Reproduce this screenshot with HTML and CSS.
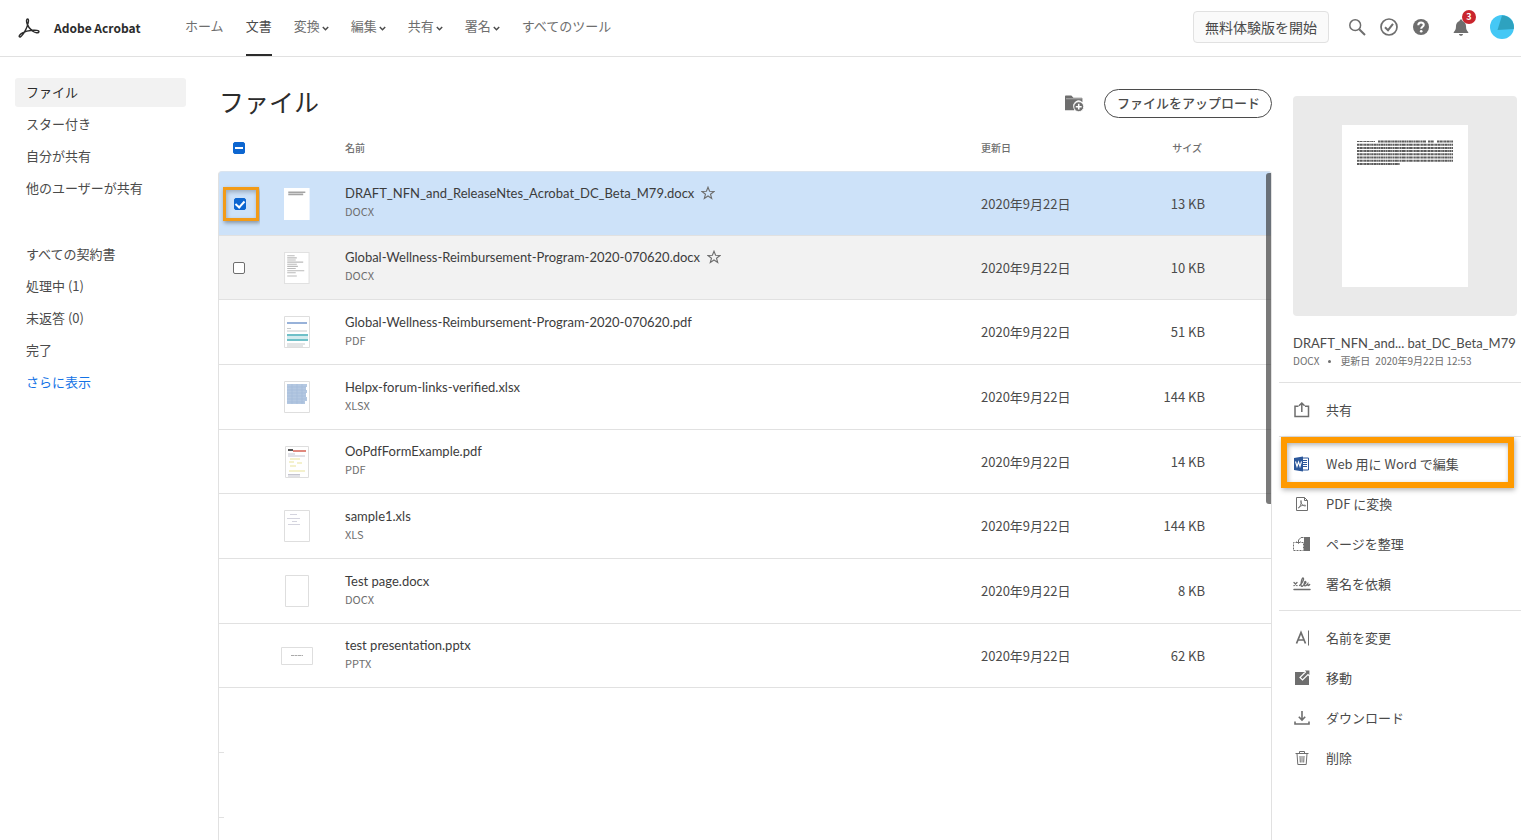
FILE: index.html
```html
<!DOCTYPE html>
<html lang="ja">
<head>
<meta charset="utf-8">
<meta name="viewport" content="width=device-width, initial-scale=1">
<title>Adobe Acrobat</title>
<link rel="stylesheet" href="styles.css">
</head>
<body>
<header class="topbar">
  <a class="brand" href="#">
    <svg class="brand-logo" viewBox="0 0 22 20" fill="none" stroke="#2c2c2c" stroke-width="1.4" stroke-linecap="round" stroke-linejoin="round"><path d="M9.700 1C8.300 1 8.300 3.300 9 5.500C9.900 8.600 12 11.200 14.800 13.200C17 14.700 20.600 15.600 20.900 13.800C21.200 12.200 17.500 12 14.300 12.300C10.600 12.600 7 13.500 4.500 14.900C2.300 16.100 .6 17.900 1.400 18.800C2.500 19.900 5.300 16.200 7.500 12.100C9.500 8.400 11.700 1 9.700 1Z"/></svg>
    <span>Adobe Acrobat</span>
  </a>
  <nav class="mainnav">
    <a href="#">ホーム</a>
    <a href="#" class="current">文書</a>
    <button type="button">変換<svg class="chev" viewBox="0 0 7 5"><path d="M.8 1 3.500 3.700 6.200 1"/></svg></button>
    <button type="button">編集<svg class="chev" viewBox="0 0 7 5"><path d="M.8 1 3.500 3.700 6.200 1"/></svg></button>
    <button type="button">共有<svg class="chev" viewBox="0 0 7 5"><path d="M.8 1 3.500 3.700 6.200 1"/></svg></button>
    <button type="button">署名<svg class="chev" viewBox="0 0 7 5"><path d="M.8 1 3.500 3.700 6.200 1"/></svg></button>
    <a href="#">すべてのツール</a>
  </nav>
  <div class="tools">
    <button type="button" class="trial">無料体験版を開始</button>
    <button type="button" class="tool" aria-label="検索"><svg viewBox="0 0 18 18" fill="none" stroke="#6e6e6e" stroke-width="1.5"><circle cx="7.200" cy="7.200" r="5.400"/><path d="M11.200 11.200 17 17" stroke-width="2"/></svg></button>
    <button type="button" class="tool" aria-label="タスク"><svg viewBox="0 0 18 18" fill="none" stroke="#6e6e6e" stroke-width="1.700"><circle cx="9" cy="9" r="8"/><path d="M5 9.300 8 12.200 13 5.800" stroke-width="2"/></svg></button>
    <button type="button" class="tool" aria-label="ヘルプ"><svg viewBox="0 0 18 18"><circle cx="9" cy="9" r="8" fill="#6e6e6e"/><path d="M6.300 7.200C6.300 3.700 11.800 3.800 11.800 6.800C11.800 8.800 9.200 8.700 9.200 10.800" fill="none" stroke="#fff" stroke-width="2"/><circle cx="9.200" cy="13.300" r="1.300" fill="#fff"/></svg></button>
    <button type="button" class="tool bell" aria-label="通知"><svg viewBox="0 0 18 18" fill="#6e6e6e"><path d="M9 1.500c.9 0 1.400.6 1.400 1.400 2.400.8 3.600 2.700 3.600 5.100 0 3.500.8 4.700 2.300 6.200v.9H1.700v-.9C3.200 12.700 4 11.500 4 8c0-2.400 1.200-4.300 3.600-5.100 0-.8.500-1.400 1.400-1.400zM7 16h4c0 1-.9 1.800-2 1.800S7 17 7 16z"/></svg><span class="count">3</span></button>
    <button type="button" class="avatar" aria-label="アカウント"><svg viewBox="0 0 24 24"><circle cx="12" cy="12" r="12" fill="#45c8f5"/><path d="M12 .5A11.800 11.800 0 0 1 23.800 14L7.500 15z" fill="#2ea2bf"/></svg></button>
  </div>
</header>

<div class="layout">
  <nav class="sidebar">
    <ul>
      <li><a href="#" class="selected">ファイル</a></li>
      <li><a href="#">スター付き</a></li>
      <li><a href="#">自分が共有</a></li>
      <li><a href="#">他のユーザーが共有</a></li>
    </ul>
    <ul>
      <li><a href="#">すべての契約書</a></li>
      <li><a href="#">処理中 (1)</a></li>
      <li><a href="#">未返答 (0)</a></li>
      <li><a href="#">完了</a></li>
      <li><a href="#" class="more">さらに表示</a></li>
    </ul>
  </nav>

  <main class="files">
    <div class="files-head">
      <h1>ファイル</h1>
      <button type="button" class="newfolder" aria-label="フォルダーを作成"><svg viewBox="0 0 18 16"><path d="M0 14.500V1.500C0 .9.400.5 1 .5h5l2 2h7.500c.6 0 1 .4 1 1v3.200A5 5 0 0 0 8.500 12.500l.3 2z" fill="#6e6e6e"/><path d="M1 3.500h15" stroke="#b9b9b9" stroke-width=".8"/><circle cx="13" cy="11" r="4.700" fill="#6e6e6e" stroke="#fff" stroke-width=".8"/><path d="M13 8.200v5.600M10.200 11h5.600" stroke="#fff" stroke-width="1.500"/></svg></button>
      <button type="button" class="upload">ファイルをアップロード</button>
    </div>
    <div class="list">
      <table>
        <thead>
          <tr>
            <th class="c-check"><input type="checkbox" class="mixed" checked aria-label="すべて選択"></th>
            <th class="c-thumb"></th>
            <th class="c-name">名前</th>
            <th class="c-date">更新日</th>
            <th class="c-size">サイズ</th>
          </tr>
        </thead>
        <tbody>
          <tr class="picked">
            <td class="c-check"><span class="mark"><input type="checkbox" checked aria-label="DRAFT_NFN_and_ReleaseNtes_Acrobat_DC_Beta_M79.docx"></span></td>
            <td class="c-thumb"><svg class="tall" viewBox="0 0 24 30"><path d="M0 0h24v30H0z" fill="#fff"/><path d="M4 4h16M4 6h14" stroke="#a4a4a4" stroke-width="1.600"/></svg></td>
            <td class="c-name"><div class="fname">DRAFT_NFN_and_ReleaseNtes_Acrobat_DC_Beta_M79.docx<svg class="star" viewBox="0 0 14 14"><path d="M7 1.200 8.600 5.300 13 5.500 9.500 8.200 10.700 12.500 7 10 3.300 12.500 4.500 8.200 1 5.500 5.400 5.300z"/></svg></div><div class="ftype">DOCX</div></td>
            <td class="c-date">2020年9月22日</td><td class="c-size">13 KB</td>
          </tr>
          <tr class="hovered">
            <td class="c-check"><input type="checkbox" aria-label="Global-Wellness-Reimbursement-Program-2020-070620.docx"></td>
            <td class="c-thumb"><svg class="tall" viewBox="0 0 24 30"><path d="M.5.500h23v29H.5z" fill="#fff" stroke="#e1e1e1"/><path d="M3 3.500h7M3 5.500h9M3 7.500h8M3 9.500h15M3 11.500h9M3 13.500h10M3 15.500h8M3 17.500h16M3 19.500h8M3 22.500h9" stroke="#bbb"/></svg></td>
            <td class="c-name"><div class="fname">Global-Wellness-Reimbursement-Program-2020-070620.docx<svg class="star" viewBox="0 0 14 14"><path d="M7 1.200 8.600 5.300 13 5.500 9.500 8.200 10.700 12.500 7 10 3.300 12.500 4.500 8.200 1 5.500 5.400 5.300z"/></svg></div><div class="ftype">DOCX</div></td>
            <td class="c-date">2020年9月22日</td><td class="c-size">10 KB</td>
          </tr>
          <tr>
            <td class="c-check"></td>
            <td class="c-thumb"><svg class="tall" viewBox="0 0 26 32"><path d="M.5.500h25v31H.5z" fill="#fff" stroke="#dedede"/><path d="M3 7h20" stroke="#7f9fd0" stroke-width="1.600"/><path d="M3 12.500h4M3 15h20M3 28h18M3 30h16" stroke="#c5cacc"/><path d="M3 18h21v7H3z" fill="#d3ebee"/><path d="M3 19h21M3 24h21" stroke="#4fb2bc" stroke-width="1.500"/></svg></td>
            <td class="c-name"><div class="fname">Global-Wellness-Reimbursement-Program-2020-070620.pdf</div><div class="ftype">PDF</div></td>
            <td class="c-date">2020年9月22日</td><td class="c-size">51 KB</td>
          </tr>
          <tr>
            <td class="c-check"></td>
            <td class="c-thumb"><svg class="tall" viewBox="0 0 26 32"><path d="M.5.500h25v31H.5z" fill="#fff" stroke="#dedede"/><path d="M3 3h20v3h-1v3h1v3h-1v4h1v4h-2v3H3z" fill="#b4c8e1"/><path d="M3 6h19M3 9h19M3 12h19M3 15h19M3 18h19M3 21h17M8 3v20M13 3v20M18 3v20" stroke="#a3bad9" stroke-width=".6"/></svg></td>
            <td class="c-name"><div class="fname">Helpx-forum-links-verified.xlsx</div><div class="ftype">XLSX</div></td>
            <td class="c-date">2020年9月22日</td><td class="c-size">144 KB</td>
          </tr>
          <tr>
            <td class="c-check"></td>
            <td class="c-thumb"><svg class="tall" viewBox="0 0 24 32"><path d="M.5.500h23v31H.5z" fill="#fff" stroke="#dedede"/><path d="M3 4h5" stroke="#555" stroke-width="2"/><path d="M8 5h13" stroke="#e0897e" stroke-width="2"/><path d="M3 8h7M3 10h17M3 28.500h12M3 30h12" stroke="#c4c4cf"/><path d="M5 13h10M4 16h5M12 17h5M5 20h6M4 25h16" stroke="#f1edbd" stroke-width="1.500"/></svg></td>
            <td class="c-name"><div class="fname">OoPdfFormExample.pdf</div><div class="ftype">PDF</div></td>
            <td class="c-date">2020年9月22日</td><td class="c-size">14 KB</td>
          </tr>
          <tr>
            <td class="c-check"></td>
            <td class="c-thumb"><svg class="tall" viewBox="0 0 26 32"><path d="M.5.500h25v31H.5z" fill="#fff" stroke="#dedede"/><path d="M6 4.500h7M3 8.500h13M8 11.500h5M4 14.500h12" stroke="#d4d4de"/></svg></td>
            <td class="c-name"><div class="fname">sample1.xls</div><div class="ftype">XLS</div></td>
            <td class="c-date">2020年9月22日</td><td class="c-size">144 KB</td>
          </tr>
          <tr>
            <td class="c-check"></td>
            <td class="c-thumb"><svg class="tall" viewBox="0 0 24 32"><path d="M.5.500h23v31H.5z" fill="#fff" stroke="#dedede"/></svg></td>
            <td class="c-name"><div class="fname">Test page.docx</div><div class="ftype">DOCX</div></td>
            <td class="c-date">2020年9月22日</td><td class="c-size">8 KB</td>
          </tr>
          <tr>
            <td class="c-check"></td>
            <td class="c-thumb"><svg class="wide" viewBox="0 0 32 18"><path d="M.5.500h31v17H.5z" fill="#fff" stroke="#dedede"/><path d="M10 8.500h12" stroke="#aaa" stroke-dasharray="3 .5"/></svg></td>
            <td class="c-name"><div class="fname">test presentation.pptx</div><div class="ftype">PPTX</div></td>
            <td class="c-date">2020年9月22日</td><td class="c-size">62 KB</td>
          </tr>
        </tbody>
      </table>
      <div class="scrollthumb"></div>
      <div class="emptyrows"></div>
    </div>
  </main>

  <aside class="details">
    <div class="preview">
      <svg viewBox="0 0 126 162"><path d="M0 0h126v162H0z" fill="#fff"/><g stroke="#5c5c5c" stroke-width="2" stroke-dasharray="2 .4 3 .3 1 .4"><path d="M15 16.500h18" stroke-width="1"/><path d="M36 16.500h48M86 16.500h6M95 16.500h16M15 19.700h96M15 22.900h96M15 26.100h96M15 29.300h96M15 32.500h96M15 35.700h96M15 38.900h43"/></g></svg>
    </div>
    <h2>DRAFT_NFN_and... bat_DC_Beta_M79</h2>
    <p class="meta"><span>DOCX</span><span class="dot"></span><span>更新日&ensp;2020年9月22日 12:53</span></p>
    <ul class="actions">
      <li><button type="button"><svg viewBox="0 0 18 18" fill="none" stroke="#6e6e6e" stroke-width="1.500"><path d="M5.500 5.200H2v10.300h13.500V5.200H12M8.800 11V2M6 4.800 8.800 2l2.800 2.800"/></svg>共有</button></li>
    </ul>
    <ul class="actions">
      <li class="boxed"><button type="button"><svg viewBox="0 0 18 18"><path d="M9 3h6.500v12H9z" fill="#fff" stroke="#2b579a"/><path d="M10 5.500h4M10 7.500h4M10 9.500h4M10 11.500h4" stroke="#2b579a"/><path d="M1 3 10 1.500v15L1 15z" fill="#2b579a"/><path d="M2.500 6.500 4 11.500 5.500 7 7 11.500 8.500 6.500" fill="none" stroke="#fff" stroke-width="1.100"/></svg>Web 用に Word で編集</button></li>
      <li><button type="button"><svg viewBox="0 0 18 18" fill="none" stroke="#6e6e6e"><path d="M3.500 2.500h8l3 3v10h-11zM11.500 2.500v3h3"/><path d="M8 5.500c-.8.600.3 3.300 1.600 4.500 1.200 1 3.200 1.300 3.200.6S8.500 9.800 5.500 12.500c-.5.600.2.900.9 0C7.500 11 9 6 8 5.500z" stroke-width=".9"/></svg>PDF に変換</button></li>
      <li><button type="button"><svg viewBox="0 0 18 18" fill="none" stroke="#6e6e6e"><path d="M11 2h6v14h-6z" fill="#6e6e6e" stroke="none"/><path d="M10.500 2.500H8L5.500 5M5.500 5v3M3.500 6.500l2 2 2-2" /><path d="M10.500 7.500h-10v8h10z" stroke-dasharray="2 1"/></svg>ページを整理</button></li>
      <li><button type="button"><svg viewBox="0 0 18 18" fill="none" stroke="#6e6e6e" stroke-width="1.300" stroke-linecap="round"><path d="M1 7.500 4 10.500M4 7.500 1 10.500"/><path d="M6.500 10.500C9 9 11.500 4 10.200 3 8.800 2.500 7.500 9 8.200 11c.6 1.200 2-.3 2.800-1.500 1.600-.8 2.500-2.500 1.500-3-1.200 0-2 3.300-.7 4.300 1.200.5 2.200-1 2.900-2 0 1.200.3 2 1 1.700l1-1"/><path d="M1 14.500h16" stroke-width="1.500"/></svg>署名を依頼</button></li>
    </ul>
    <ul class="actions">
      <li><button type="button"><svg viewBox="0 0 18 18" fill="none" stroke="#6e6e6e"><path d="M3.500 14.500 8 3.500l4.500 11M5 11h6" stroke-width="1.700"/><path d="M15.500 1.500v15"/></svg>名前を変更</button></li>
      <li><button type="button"><svg viewBox="0 0 18 18"><path d="M2 3h14v13H2z" fill="#6e6e6e"/><path d="M10.500 1H17v6.500l-2-2-5.500 5.500-2.500-2.500L12.500 3z" fill="#6e6e6e" stroke="#fff" stroke-width="1.200"/></svg>移動</button></li>
      <li><button type="button"><svg viewBox="0 0 18 18" fill="none" stroke="#6e6e6e" stroke-width="1.600"><path d="M9 2v8.500M5.800 7.800 9 11l3.200-3.200M2 12.500V15h14v-2.500"/></svg>ダウンロード</button></li>
      <li><button type="button"><svg viewBox="0 0 18 18" fill="none" stroke="#6e6e6e"><path d="M2.500 4.500h13M6.500 4.500v-2h5v2M4 4.500l.8 11h8.400l.8-11M7 7l.3 6.500M9 7v6.500M11 7l-.3 6.500"/></svg>削除</button></li>
    </ul>
  </aside>
</div>
</body>
</html>
```
FILE: styles.css
```css
* { box-sizing: border-box; }

body {
  margin: 0;
  min-height: 100vh;
  display: flex;
  flex-direction: column;
  background: #fff;
  color: #4b4b4b;
  font-family: "Noto Sans CJK JP", "Noto Sans", sans-serif;
  font-size: 13px;
  line-height: 18px;
}

button {
  margin: 0;
  padding: 0;
  border: 0;
  background: none;
  color: inherit;
  font: inherit;
  cursor: pointer;
}

a { color: inherit; text-decoration: none; }
ul { margin: 0; padding: 0; list-style: none; }
svg { display: block; flex: none; }

/* Top bar */
.topbar {
  display: flex;
  align-items: stretch;
  height: 57px;
  padding: 0 7px 0 18px;
  border-bottom: 1px solid #e1e1e1;
}

.brand {
  display: flex;
  align-items: center;
  gap: 14px;
  width: 167px;
  color: #2c2c2c;
  font-size: 12px;
  font-weight: 700;
  white-space: nowrap;
}

.brand-logo { width: 22px; height: 20px; }

.mainnav { display: flex; gap: 22px; color: #6e6e6e; white-space: nowrap; }

.mainnav > * {
  display: flex;
  align-items: center;
  gap: 2px;
  padding-bottom: 2px;
  border-bottom: 2px solid transparent;
}

.mainnav .current { border-color: #2c2c2c; color: #4b4b4b; }

.chev {
  width: 7px;
  height: 5px;
  margin-top: 4px;
  fill: none;
  stroke: #4b4b4b;
  stroke-width: 1.5;
}

.tools { display: flex; align-items: center; gap: 14px; margin-left: auto; padding-bottom: 3px; }

.trial {
  height: 32px;
  padding: 0 11px;
  margin-right: 5px;
  border: 1px solid #e1e1e1;
  border-radius: 4px;
  background: #fafafa;
  font-size: 14px;
  white-space: nowrap;
}

.tool svg { width: 18px; height: 18px; }
.bell { position: relative; margin: 0 6px 0 8px; }

.count {
  position: absolute;
  top: -8px;
  right: -6px;
  width: 14px;
  height: 14px;
  border-radius: 50%;
  background: #c9252d;
  color: #fff;
  font-size: 9px;
  font-weight: 700;
  line-height: 14px;
}

.avatar svg { width: 24px; height: 24px; }

/* Page columns */
.layout {
  flex: 1;
  display: grid;
  grid-template-columns: 218px minmax(0, 1fr) 249px;
}

.sidebar {
  display: flex;
  flex-direction: column;
  gap: 37px;
  padding: 21px 32px 0 15px;
}

.sidebar ul { display: grid; gap: 3px; }

.sidebar a {
  display: block;
  padding: 5px 11px 6px;
  border-radius: 3px;
}

.sidebar .selected { background: #f2f2f2; color: #2c2c2c; }
.sidebar .more { color: #1473e6; }

/* File list */
.files { display: flex; flex-direction: column; }

.files-head {
  display: flex;
  align-items: center;
  gap: 20px;
  padding-top: 32px;
  margin-bottom: 6px;
}

h1 {
  margin: 0 auto 0 0;
  padding: 0 0 4px 1px;
  color: #2c2c2c;
  font-size: 25px;
  font-weight: 400;
  line-height: 25px;
}

.newfolder svg { width: 19px; height: 17px; }

.upload {
  height: 29px;
  padding: 0 11px 2px 12px;
  border: 1px solid #4b4b4b;
  border-radius: 15px;
  font-weight: 500;
  white-space: nowrap;
}

.list {
  position: relative;
  flex: 1;
  display: flex;
  flex-direction: column;
}

input[type="checkbox"] {
  display: block;
  appearance: none;
  width: 12px;
  height: 12px;
  margin: 0;
  border: 1px solid #6e6e6e;
  border-radius: 2px;
  background: #fff;
}

input[type="checkbox"]:checked { border-color: #0d66d0; background: #0d66d0; }

input[type="checkbox"]:checked::after {
  content: "";
  display: block;
  width: 4px;
  height: 7px;
  margin: 0 auto;
  border: solid #fff;
  border-width: 0 2px 2px 0;
  transform: rotate(42deg);
}

input[type="checkbox"].mixed:checked::after {
  width: 8px;
  height: 2px;
  margin-top: 4px;
  border: 0;
  background: #fff;
  transform: none;
}

table { width: 100%; border-collapse: separate; border-spacing: 0; table-layout: fixed; }
th, td { padding: 0; text-align: left; vertical-align: middle; }
th { height: 47px; color: #6e6e6e; font-size: 10px; font-weight: 500; }
td { height: 65px; border-bottom: 1px solid #e1e1e1; }
tr:nth-child(3n + 2) td { height: 64px; }
tbody tr:first-child td { border-top: 1px solid #dae4ef; }
tbody .c-check { border-left: 1px solid #e1e1e1; }
tbody .c-size { border-right: 1px solid #e1e1e1; }
tbody tr:first-child .c-check { border-top-left-radius: 4px; }
tbody tr:first-child .c-size { border-top-right-radius: 4px; }

.c-check { width: 42px; }
th.c-check > input { margin-left: 15px; }
td.c-check > input { margin-left: 14px; }
.c-thumb { width: 85px; }
.c-thumb svg { margin: 0 auto; }
td.c-thumb { padding-right: 11px; }
.c-date { width: 120px; }
.c-size { width: 171px; padding-right: 66px; text-align: right; }
th.c-size { padding-right: 70px; }

.picked td { background: #cde2f9; }
.hovered td { background: #f2f2f2; }
.tall { height: 32px; }
.wide { height: 18px; }

.fname {
  display: flex;
  align-items: center;
  gap: 7px;
  color: #3c3c3c;
  font-family: Lato, "Noto Sans CJK JP", sans-serif;
  white-space: nowrap;
}

td.c-name { padding-bottom: 3px; }
.ftype { color: #6e6e6e; font-size: 11px; }
.star { width: 14px; height: 14px; fill: none; stroke: #6e6e6e; stroke-width: 1.1; }

.mark {
  display: block;
  width: 36px;
  margin-left: 4px;
  padding: 8px;
  border: 3px solid #f29b18;
  box-shadow: 1px 2px 4px rgba(0, 0, 0, 0.35), inset 1px 2px 4px rgba(0, 0, 0, 0.25);
}

.scrollthumb {
  position: absolute;
  top: 49px;
  right: 1px;
  width: 5px;
  height: 331px;
  border-radius: 3px 0 0 3px;
  background: rgba(50, 50, 50, 0.65);
}

.emptyrows {
  flex: 1;
  border: solid #e1e1e1;
  border-width: 0 1px;
  background: repeating-linear-gradient(transparent 0 64px, #e1e1e1 64px 65px) 0 0 / 5px 100% no-repeat;
}

/* Details pane */
.details { padding: 39px 0 0 7px; }

.preview {
  display: flex;
  align-items: center;
  justify-content: center;
  height: 220px;
  margin: 0 4px 18px 14px;
  border-radius: 4px;
  background: #eaeaea;
}

.preview svg { width: 126px; height: 162px; margin-bottom: 1px; }

h2 {
  margin: 0 0 0 14px;
  font-family: Lato, "Noto Sans CJK JP", sans-serif;
  font-size: 13px;
  font-weight: 400;
  line-height: 18px;
  white-space: nowrap;
}

.meta {
  display: flex;
  align-items: center;
  gap: 9px;
  margin: 0 0 12px 14px;
  color: #6e6e6e;
  font-size: 10px;
  white-space: nowrap;
}

.dot { width: 3px; height: 3px; border-radius: 50%; background: #6e6e6e; }

.actions { padding: 7px 0 6px; border-top: 1px solid #e1e1e1; }

.actions button {
  display: flex;
  align-items: center;
  gap: 15px;
  width: 100%;
  height: 40px;
  padding-left: 14px;
  text-align: left;
  white-space: nowrap;
}

.actions svg { width: 18px; height: 18px; }
.boxed { position: relative; }

.boxed::after {
  content: "";
  position: absolute;
  inset: -7px 7px -4px 2px;
  border: 6px solid #ff9a00;
  box-shadow: 1px 2px 5px rgba(0, 0, 0, 0.3), inset 1px 2px 5px rgba(0, 0, 0, 0.3);
  pointer-events: none;
}
```
